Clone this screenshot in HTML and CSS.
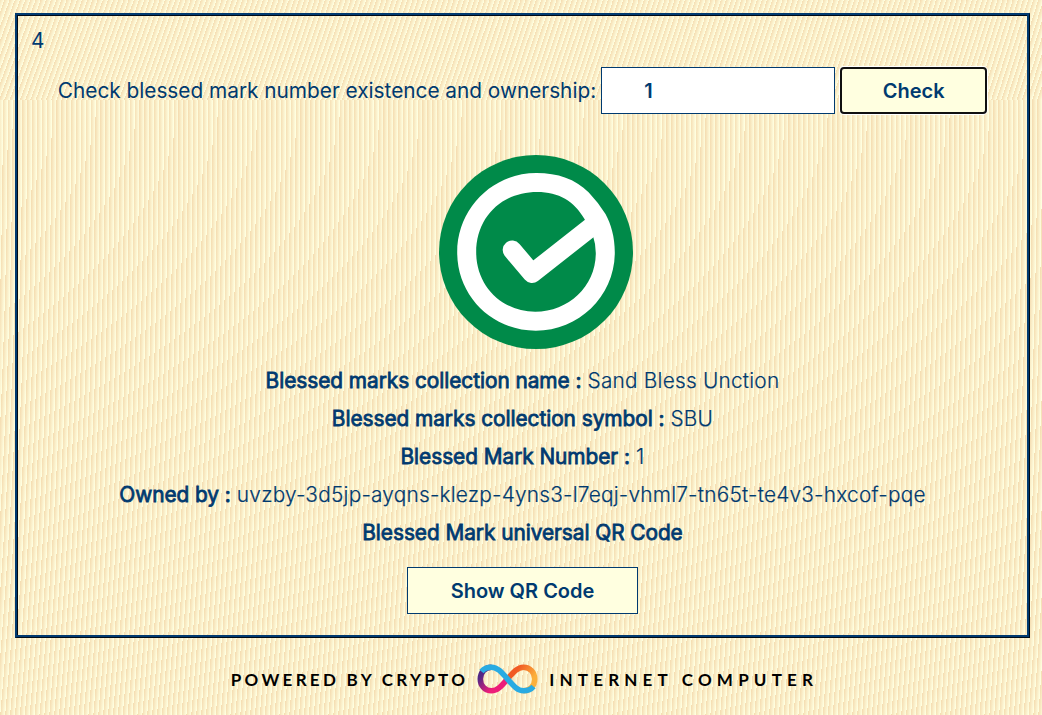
FILE: index.html
```html
<!DOCTYPE html>
<html lang="en">
<head>
    <meta charset="UTF-8">
    <meta name="viewport" content="width=device-width, initial-scale=1.0">
    <title>Blessed Marks</title>
    <link rel="stylesheet" href="styles.css">
</head>
<body>

    <main class="panel">
        <div class="count">4</div>

        <form class="check-form">
            <label for="markNumber">Check blessed mark number existence and ownership:</label>
            <input type="text" id="markNumber" value="1">
            <button type="button" class="check-button">Check</button>
        </form>

        <svg class="check-icon" viewBox="0 0 194 194">
            <circle cx="97" cy="97" r="97" fill="#008a49"/>
            <path fill="#fff" fill-rule="evenodd" d="M97.500 18 C119 18 136 24 149.800 37.400 Q159 47 166.500 59 C172 69 175.800 82 175.800 97.400 C175.800 141 140 175.700 96.800 175.700 C53 175.700 18.200 141 18.200 97.400 C18.200 53 54 18 97.500 18 Z M98.200 37 C120 37 135 46 145.500 64 L154.200 81.700 Q156.800 89 156.800 98 C156.800 131 130 156.700 96.200 156.700 C63 156.700 37.200 131 37.200 97.400 C37.200 63 62 37 98.200 37 Z"/>
            <path d="M73.200 95 L93 118.500 L156 69" fill="none" stroke="#fff" stroke-width="19" stroke-linecap="round" stroke-linejoin="round"/>
        </svg>

        <div class="details">
            <p><b>Blessed marks collection name :</b> Sand Bless Unction</p>
            <p><b>Blessed marks collection symbol :</b> SBU</p>
            <p><b>Blessed Mark Number :</b> 1</p>
            <p><b>Owned by :</b> uvzby-3d5jp-ayqns-klezp-4yns3-l7eqj-vhml7-tn65t-te4v3-hxcof-pqe</p>
            <p><b>Blessed Mark universal QR Code</b></p>
        </div>

        <button type="button" class="qr-button">Show QR Code</button>
    </main>

    <footer class="powered">
        <span class="powered-left">POWERED BY CRYPTO</span>
        <svg class="infinity" viewBox="0 0 60 30">
            <defs>
                <linearGradient id="warm" x1="0" y1="0" x2="1" y2="0.6">
                    <stop offset="0.3" stop-color="#f15a24"/>
                    <stop offset="0.9" stop-color="#fbb03b"/>
                </linearGradient>
                <linearGradient id="pink" x1="1" y1="1" x2="0" y2="0.2">
                    <stop offset="0.4" stop-color="#ed1e79"/>
                    <stop offset="0.9" stop-color="#522785"/>
                </linearGradient>
            </defs>
            <g fill="none" stroke-width="5.600">
                <path d="M30 15 C36 8 40 3.200 46 3.200 C52.500 3.200 57.200 8.500 57.200 15 C57.200 21.500 52.500 26.800 46 26.800" stroke="url(#warm)"/>
                <path d="M30 15 C24 22 20 26.800 14 26.800 C7.500 26.800 2.800 21.500 2.800 15 C2.800 8.500 7.500 3.200 14 3.200" stroke="url(#pink)"/>
                <path d="M4 7.500 C6.500 4.500 10 3.200 14 3.200 C20 3.200 24 8 30 15 C36 22 40 26.800 46 26.800 C50 26.800 53.500 25.500 56 22.500" stroke="#29abe2"/>
            </g>
        </svg>
        <span class="powered-right">INTERNET COMPUTER</span>
    </footer>

</body>
</html>
```
FILE: styles.css
```css
html {
    background: lightyellow;
}

body {
    margin: 0;
    padding: 13px 12px 0 15px;
    min-height: 715px;
    box-sizing: border-box;
    font-family: Inter, sans-serif;
    font-size: 20.8px;
    color: #003a70;
    background-image: repeating-radial-gradient(circle at -7000px 0, #f5deb3 0, #ffffe0 4.88px);
    background-size: 100% 2600px;
    background-position: 0 100px;
}

/* Two-tone ridge: blue face, black shade */
.panel {
    display: flex;
    flex-direction: column;
    align-items: center;
    height: 625px;
    box-sizing: border-box;
    padding: 1px 2px 2px 1px;
    border-style: solid;
    border-width: 2px 1px 1px 2px;
    border-color: #003a70 #000c18 #000c18 #003a70;
    box-shadow: inset -2px -2px 0 #003a70, inset 1px 1px 0 #000c18;
}

.count {
    align-self: flex-start;
    margin: 12px 0 0 13px;
    line-height: 25px;
}

.check-form {
    display: flex;
    align-items: center;
    margin-top: 14px;
    gap: 5px;
}

.check-form label {
    letter-spacing: -0.01px;
}

input,
button {
    height: 47px;
    box-sizing: border-box;
    border: 1px solid #003a70;
    padding: 0 42px;
    font-family: inherit;
    font-size: 20px;
    font-weight: 600;
    color: #003a70;
    white-space: nowrap;
}

input {
    width: 234px;
    background: #fff;
}

button {
    background: lightyellow;
}

/* Focus ring on the last clicked button */
.check-button {
    width: 143px;
    height: 43px;
    padding: 0;
    border: 0;
    margin: 0 2px;
    border-radius: 2px;
    outline: 2px solid #101010;
    box-shadow: 0 0 0 3px #fff;
}

.check-icon {
    width: 194px;
    height: 194px;
    margin: 41px 0 0 26px;
}

.details {
    margin-top: 19px;
    text-align: center;
}

.details p {
    margin: 0 0 13px;
    line-height: 25px;
    font-weight: 300;
    letter-spacing: 0.23px;
    white-space: nowrap;
    -webkit-text-stroke: 0.2px #003a70;
}

.details b {
    font-weight: 400;
    letter-spacing: -0.03px;
    -webkit-text-stroke: 0.8px #003a70;
}

.qr-button {
    width: 231px;
    margin-top: 9px;
}

.powered {
    display: flex;
    justify-content: center;
    align-items: center;
    height: 30px;
    margin-top: 26px;
    font-family: Lato, sans-serif;
    font-size: 17px;
    font-weight: 700;
    color: #000;
}

.powered-left {
    letter-spacing: 3.3px;
}

.powered-right {
    margin-right: -4px;
    letter-spacing: 5.2px;
}

.infinity {
    width: 61px;
    height: 30px;
    margin: 0 11px 0 9px;
}
```
